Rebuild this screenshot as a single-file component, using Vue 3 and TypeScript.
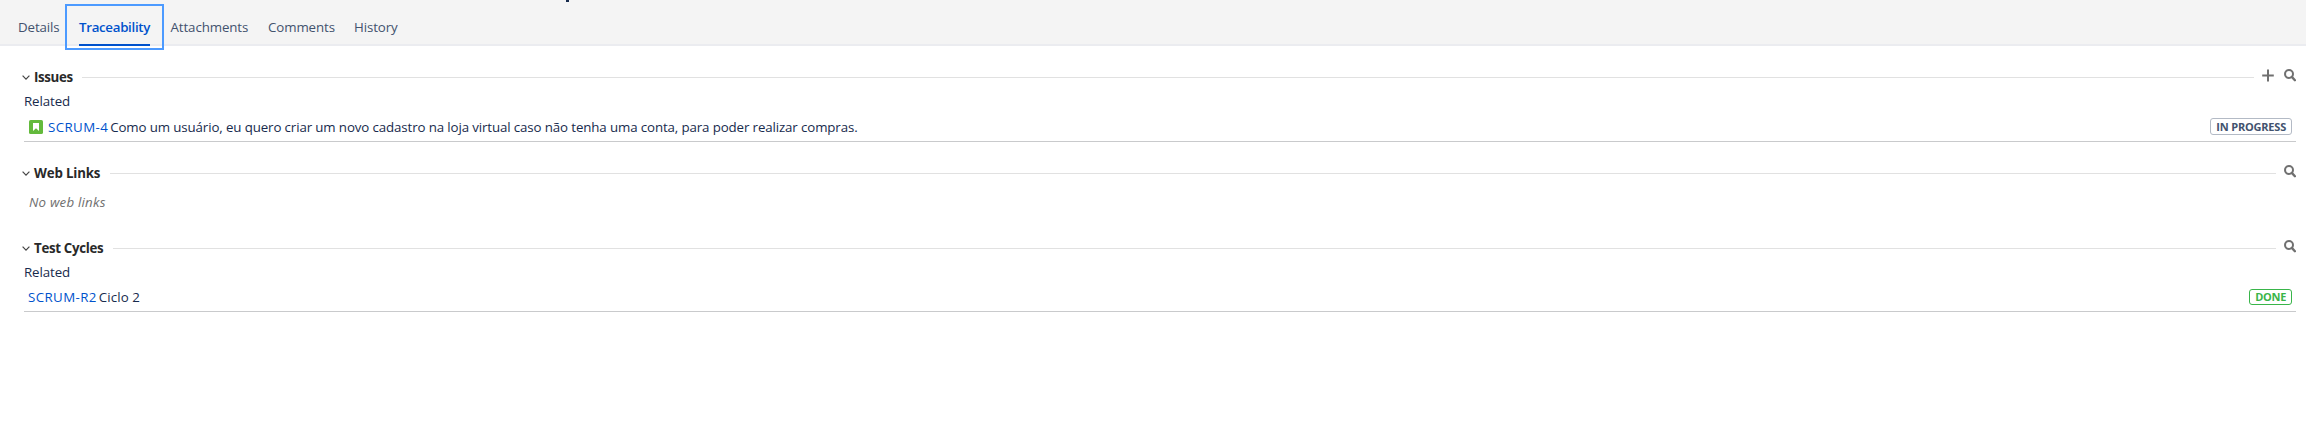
<script setup lang="ts">
interface Row { key: string; title: string; status: string; tone: string; story: boolean }
interface Section { id: string; title: string; addable: boolean; rows: Row[]; empty?: string }

const tabs = ['Details', 'Traceability', 'Attachments', 'Comments', 'History']
const active = 'Traceability'

const sections: Section[] = [
  {
    id: 'issues',
    title: 'Issues',
    addable: true,
    rows: [{
      key: 'SCRUM-4',
      title: 'Como um usuário, eu quero criar um novo cadastro na loja virtual caso não tenha uma conta, para poder realizar compras.',
      status: 'IN PROGRESS',
      tone: 'progress',
      story: true,
    }],
  },
  { id: 'links', title: 'Web Links', addable: false, rows: [], empty: 'No web links' },
  {
    id: 'cycles',
    title: 'Test Cycles',
    addable: false,
    rows: [{ key: 'SCRUM-R2', title: 'Ciclo 2', status: 'DONE', tone: 'done', story: false }],
  },
]
</script>

<template>
  <div class="page">
    <nav class="tabs">
      <i class="descender"></i>
      <a v-for="t in tabs" :key="t" class="tab" :class="[t.toLowerCase(), { active: t === active }]"><span>{{ t }}</span></a>
    </nav>
    <main>
      <section v-for="s in sections" :key="s.id" :class="s.id">
        <header class="head">
          <svg class="chevron" width="8" height="5" viewBox="0 0 8 5"><path d="M.6.7 4 4.1 7.4.7" fill="none" stroke="#444" stroke-width="1.2" /></svg>
          <h2>{{ s.title }}</h2>
          <hr>
          <svg v-if="s.addable" class="plus" width="13" height="13" viewBox="0 0 13 13"><path d="M6 .5v12M.2 6.5h11.6" stroke="#707070" stroke-width="2" /></svg>
          <svg class="search" width="12" height="13" viewBox="0 0 12 13"><circle cx="5" cy="5" r="4" fill="none" stroke="#707070" stroke-width="2" /><path d="m7.8 7.9 3.1 3.3" stroke="#707070" stroke-width="2.4" stroke-linecap="round" /></svg>
        </header>
        <p v-if="s.empty" class="empty">{{ s.empty }}</p>
        <template v-else>
          <div class="group">Related</div>
          <div v-for="r in s.rows" :key="r.key" class="row">
            <svg v-if="r.story" class="story" width="14" height="14" viewBox="0 0 14 14"><rect width="14" height="14" rx="1.6" fill="#63ba3c" /><path d="M4 3h6v8L7 8.3 4 11z" fill="#fff" /></svg>
            <a class="key">{{ r.key }}</a>
            <span class="title">{{ r.title }}</span>
            <span class="badge" :class="r.tone">{{ r.status }}</span>
          </div>
        </template>
      </section>
    </main>
  </div>
</template>

<style>
body { background: #fff; }
</style>

<style scoped>
.page {
  width: 2306px;
  height: 423px;
  overflow: hidden;
  background: #fff;
  color: #172b4d;
  font: 13.3px/18px "Open Sans", "Noto Sans", sans-serif;
}
.tabs {
  position: relative;
  display: flex;
  box-sizing: border-box;
  height: 46px;
  padding-left: 8px;
  background: #f4f4f4;
  border-bottom: 2px solid #ebecf0;
}
.descender { position: absolute; left: 566px; top: 0; width: 3px; height: 2px; background: #172b4d; }
.tab {
  box-sizing: border-box;
  height: 46px;
  padding: 18px 0 0 10px;
  color: #42526e;
  white-space: nowrap;
  letter-spacing: -.1px;
}
.details { width: 57px; }
.attachments { width: 94px; padding-left: 6.5px; }
.comments { width: 86px; }
.history { width: 60px; }
.tab.active {
  width: 99px;
  height: 46px;
  margin-top: 4px;
  padding: 12px 12px 0;
  border: 2px solid #4c9aff;
  color: #0052cc;
  font-weight: 600;
  letter-spacing: -.3px;
}
.active span { display: block; height: 26px; border-bottom: 2px solid #0052cc; }
main { padding: 22px 10px 0 22px; }
section { box-sizing: border-box; }
.issues { height: 96px; }
.links { height: 75px; }
.head { display: flex; align-items: center; height: 18px; }
h2 {
  margin: 0 9.5px 0 4px;
  color: #292929;
  font-size: 13.3px;
  line-height: 18px;
  letter-spacing: -.35px;
}
.links h2 { letter-spacing: -.16px; }
.cycles h2 { letter-spacing: -.32px; }
hr { flex: 1; height: 1px; margin: 1px 8px 0 0; border: 0; background: #e1e1e1; }
.plus { margin: -4px 9px 0 0; }
.search { margin-top: -3px; }
.group { height: 24px; margin: 6px 0 0 2px; letter-spacing: -.1px; }
.row {
  display: flex;
  align-items: center;
  box-sizing: border-box;
  height: 26px;
  margin-left: 2px;
  padding: 4px 4px 8px;
  border-bottom: 1px solid #c9cacc;
}
.cycles .row { height: 25px; padding-top: 3px; }
.story { margin: 1px 5px 0 1px; }
.key { color: #0052cc; letter-spacing: .4px; }
.title { margin-left: 2px; letter-spacing: -.12px; }
.cycles .title { letter-spacing: .1px; }
.badge {
  box-sizing: border-box;
  height: 17px;
  margin-left: auto;
  padding: 0 5px 0 5.5px;
  border: 1px solid #b3bac5;
  border-radius: 3px;
  color: #42526e;
  font-size: 11px;
  line-height: 15px;
  font-weight: 700;
  letter-spacing: -.2px;
}
.badge.done { height: 16px; margin-top: 1px; line-height: 14px; border-color: #39b54a; color: #39b54a; letter-spacing: -.3px; }
.empty { margin: 11px 0 0 7px; color: #707070; font-style: italic; letter-spacing: .2px; }
</style>
